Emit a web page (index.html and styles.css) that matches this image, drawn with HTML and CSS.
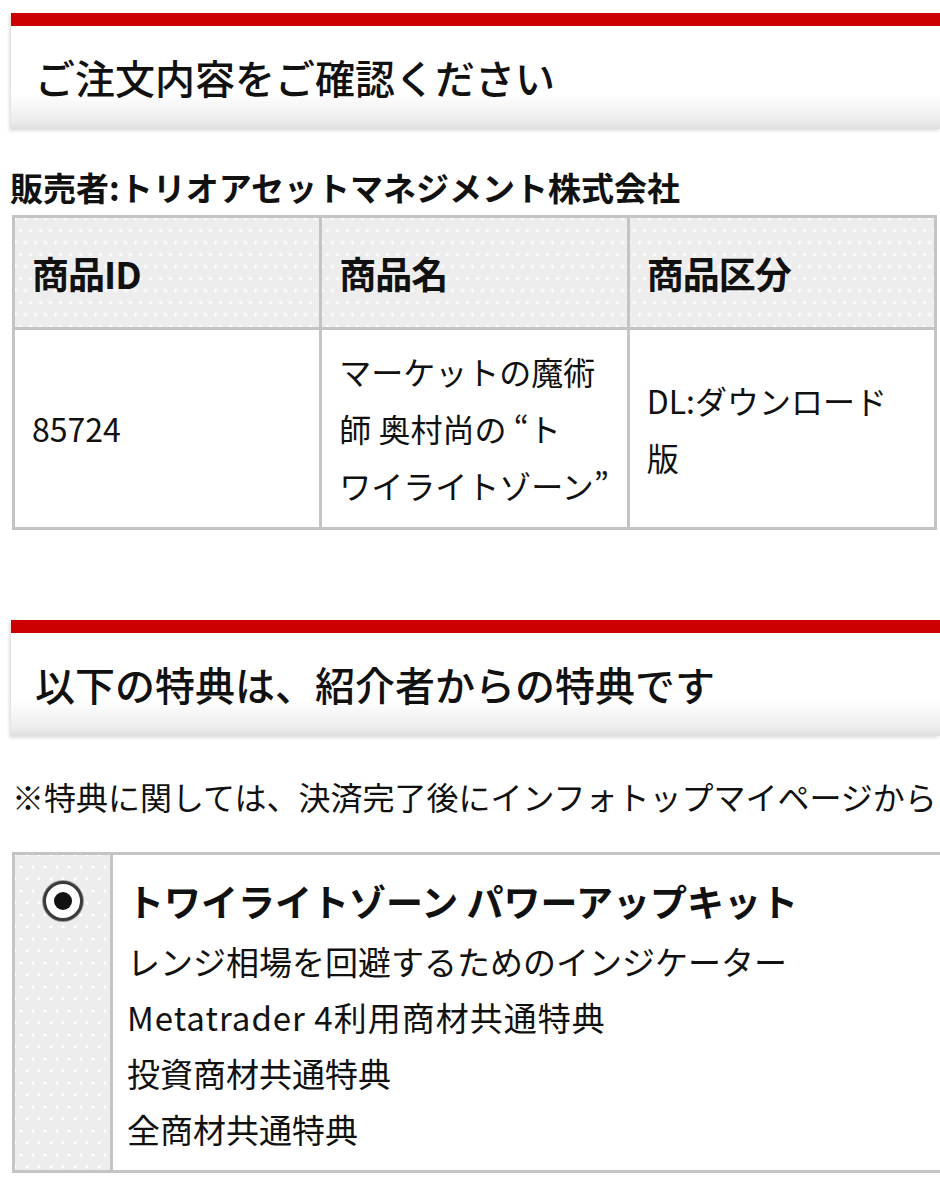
FILE: index.html
```html
<!DOCTYPE html>
<html lang="ja">
<head>
<meta charset="utf-8">
<title>ご注文内容をご確認ください</title>
<link rel="stylesheet" href="styles.css">
</head>
<body>
<div class="page">
  <h2 class="sec-head sec-first">ご注文内容をご確認ください</h2>
  <p class="seller">販売者:トリオアセットマネジメント株式会社</p>
  <table class="items">
    <thead>
      <tr><th>商品ID</th><th>商品名</th><th>商品区分</th></tr>
    </thead>
    <tbody>
      <tr>
        <td>85724</td>
        <td>マーケットの魔術<br>師 奥村尚の “ト<br>ワイライトゾーン”</td>
        <td>DL:ダウンロード<br>版</td>
      </tr>
    </tbody>
  </table>

  <h2 class="sec-head sec-second">以下の特典は、紹介者からの特典です</h2>
  <p class="note">※特典に関しては、決済完了後にインフォトップマイページから</p>

  <div class="bonus">
    <div class="bonus-select"><span class="radio"><span class="radio-dot"></span></span></div>
    <div class="bonus-body">
      <div class="bonus-title">トワイライトゾーン パワーアップキット</div>
      <div class="bonus-line">レンジ相場を回避するためのインジケーター</div>
      <div class="bonus-line bonus-latin">Metatrader 4利用商材共通特典</div>
      <div class="bonus-line">投資商材共通特典</div>
      <div class="bonus-line">全商材共通特典</div>
    </div>
  </div>
</div>
</body>
</html>
```

FILE: styles.css
```css
html, body {
  margin: 0;
  padding: 0;
  overflow: hidden;
  background: #fff;
}
body {
  font-family: "Noto Sans CJK JP", "Noto Sans", sans-serif;
  color: #111;
}
.page {
  width: 940px;
  overflow: hidden;
}
.sec-head {
  margin: 0 0 0 11px;
  border-top: 13px solid #cc0000;
  padding: 31px 0 32px 24px;
  font-size: 40px;
  line-height: 40px;
  font-weight: 500;
  color: #111;
  background: linear-gradient(to bottom, #ffffff 0%, #ffffff 66%, #f6f6f6 78%, #ececec 92%, #dedede 100%);
  box-shadow: -2px 2px 3px rgba(0, 0, 0, 0.13);
  white-space: nowrap;
}
.sec-first {
  margin-top: 13px;
}
.sec-second {
  margin-top: 90px;
}
.seller {
  margin: 38px 0 0 10px;
  font-size: 33px;
  line-height: 40px;
  font-weight: 700;
  white-space: nowrap;
}
.items {
  margin: 8px 0 0 12px;
  width: 925px;
  border-collapse: collapse;
  table-layout: fixed;
  border: 3px solid #c4c4c4;
}
.items th, .items td {
  border: 3px solid #c4c4c4;
  text-align: left;
  padding: 0 10px 0 17px;
  vertical-align: middle;
}
.items th {
  height: 109px;
  font-size: 37px;
  font-weight: 700;
  letter-spacing: -1px;
  background-color: #ededed;
  background-image:
    radial-gradient(circle, #ffffff 1.3px, transparent 1.8px),
    radial-gradient(circle, #ffffff 1.3px, transparent 1.8px);
  background-size: 10px 24px, 10px 24px;
  background-position: 0 0, 5px 12px;
}
.items td {
  height: 197px;
  font-size: 32px;
  line-height: 57px;
  font-weight: 400;
}
.note {
  margin: 40px 0 0 12px;
  font-size: 32px;
  line-height: 40px;
  white-space: nowrap;
}
.bonus {
  margin: 36px 0 0 12px;
  width: 960px;
  display: flex;
  border: 3px solid #c4c4c4;
}
.bonus-select {
  width: 98px;
  flex: none;
  border-right: 3px solid #c4c4c4;
  display: flex;
  justify-content: center;
  align-items: flex-start;
  padding-top: 26px;
  box-sizing: border-box;
  background-color: #ededed;
  background-image:
    radial-gradient(circle, #ffffff 1.3px, transparent 1.8px),
    radial-gradient(circle, #ffffff 1.3px, transparent 1.8px);
  background-size: 12px 24px, 12px 24px;
  background-position: 0 0, 6px 12px;
}
.radio {
  width: 34px;
  height: 34px;
  border-radius: 50%;
  border: 3px solid #3a3a3a;
  background: #fff;
  display: flex;
  align-items: center;
  justify-content: center;
  box-shadow: 0 0 0 1px #999;
}
.radio-dot {
  width: 18px;
  height: 18px;
  border-radius: 50%;
  background: #111;
}
.bonus-body {
  flex: 1;
  padding: 14px 0 13px 14px;
  background: #fff;
}
.bonus-title {
  font-size: 37px;
  line-height: 64px;
  font-weight: 700;
  white-space: nowrap;
}
.bonus-line {
  font-size: 33px;
  line-height: 56px;
  white-space: nowrap;
}
.bonus-latin {
  letter-spacing: 1px;
}
```
